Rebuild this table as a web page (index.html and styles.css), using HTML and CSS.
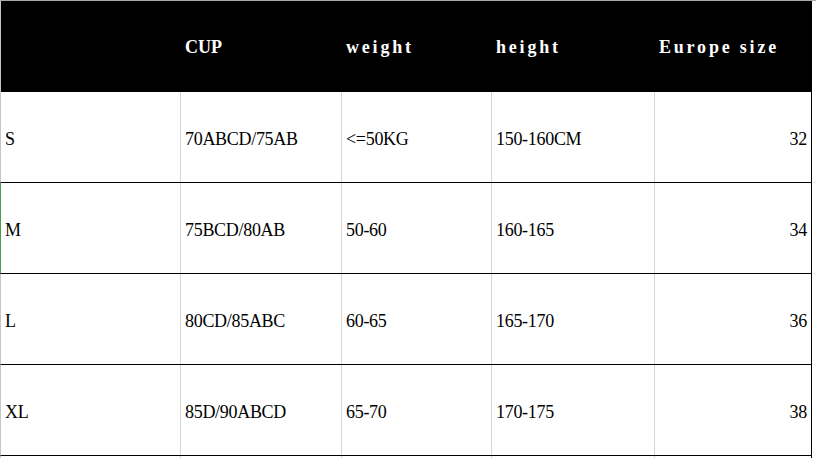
FILE: index.html
```html
<!DOCTYPE html>
<html>
<head>
<meta charset="utf-8">
<link rel="stylesheet" href="styles.css">
</head>
<body>
<div class="sheet">
  <div class="row head">
    <div class="cell"></div>
    <div class="cell caps">CUP</div>
    <div class="cell">weight</div>
    <div class="cell">height</div>
    <div class="cell">Europe size</div>
  </div>
  <div class="row body">
    <div class="cell">S</div>
    <div class="cell">70ABCD/75AB</div>
    <div class="cell">&lt;=50KG</div>
    <div class="cell">150-160CM</div>
    <div class="cell num">32</div>
  </div>
  <div class="row body sel">
    <div class="cell">M</div>
    <div class="cell">75BCD/80AB</div>
    <div class="cell">50-60</div>
    <div class="cell">160-165</div>
    <div class="cell num">34</div>
  </div>
  <div class="row body">
    <div class="cell">L</div>
    <div class="cell">80CD/85ABC</div>
    <div class="cell">60-65</div>
    <div class="cell">165-170</div>
    <div class="cell num">36</div>
  </div>
  <div class="row body">
    <div class="cell">XL</div>
    <div class="cell">85D/90ABCD</div>
    <div class="cell">65-70</div>
    <div class="cell">170-175</div>
    <div class="cell num">38</div>
  </div>
  <div class="row tail">
    <div class="cell"></div>
    <div class="cell"></div>
    <div class="cell"></div>
    <div class="cell"></div>
    <div class="cell"></div>
  </div>
</div>
</body>
</html>
```
FILE: styles.css
```css
html, body {
  margin: 0;
  padding: 0;
  background: #ffffff;
}

.sheet {
  width: 816px;
  border-top: 1px solid #ababab;
}

.row {
  display: grid;
  grid-template-columns: 180px 161px 150px 163px 157px;
  width: 812px;
  box-sizing: border-box;
  border-left: 1px solid #c6c6c6;
}

.cell {
  box-sizing: border-box;
  border-right: 1px solid #d4d4d4;
  display: flex;
  align-items: center;
  padding: 2px 4px 0 4px;
  white-space: nowrap;
}

.cell:last-child {
  border-right-color: #000000;
}

.head {
  height: 91px;
  background: #000000;
}

.head .cell {
  border-right-color: #000000;
  color: #ffffff;
  font-family: "Liberation Serif", serif;
  font-weight: bold;
  font-size: 18px;
  letter-spacing: 2.8px;
}

.head .cell.caps {
  letter-spacing: 0;
}

.body {
  height: 91px;
  border-bottom: 1px solid #000000;
}

.body .cell {
  font-family: "Liberation Serif", serif;
  font-size: 18px;
  letter-spacing: -0.3px;
  color: #000000;
  padding-top: 4px;
}

.body .cell.num {
  justify-content: flex-end;
}

.sel {
  border-left-color: #4a9e4a;
}

.tail {
  height: 3px;
}
```
